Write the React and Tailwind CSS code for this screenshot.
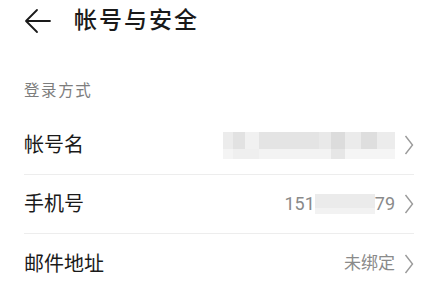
import React from 'react';

const FONT = "font-['Roboto','Noto_Sans_CJK_SC',sans-serif]";

const Chevron = () => (
  <svg width="10" height="20" viewBox="0 0 10 20" className="ml-[9px] shrink-0">
    <path d="M1.5 1 L8.5 10 L1.5 19" fill="none" stroke="#9a9a9a" strokeWidth="1.4" strokeLinejoin="miter" />
  </svg>
);

// blurred (masked) account name
const BlurredName = () => (
  <div className="flex flex-col w-[172px] h-[27px]">
    <div className="flex h-[17px]">
      <div className="w-[10px] bg-[#ececec]" />
      <div className="w-[12px] bg-[#e2e2e2]" />
      <div className="w-[14px] bg-[#f1f1f1]" />
      <div className="w-[60px] bg-[#e4e4e4]" />
      <div className="w-[12px] bg-[#e9e9e9]" />
      <div className="w-[14px] bg-[#dcdcdc]" />
      <div className="w-[16px] bg-[#ebebeb]" />
      <div className="w-[16px] bg-[#dedede]" />
      <div className="w-[18px] bg-[#ececec]" />
    </div>
    <div className="flex h-[10px]">
      <div className="w-[10px] bg-[#f4f4f4]" />
      <div className="w-[26px] bg-[#efefef]" />
      <div className="w-[72px] bg-[#f3f3f3]" />
      <div className="w-[14px] bg-[#e6e6e6]" />
      <div className="w-[50px] bg-[#f5f5f5]" />
    </div>
  </div>
);

const Row = ({ label, children, last }) => (
  <div className={`flex items-center justify-between h-[59px] ${last ? '' : 'border-b border-[#ededed]'}`}>
    <span className="text-[20px] text-[#1a1a1a] leading-none">{label}</span>
    <div className="flex items-center text-[17px] text-[#8a8a8a] leading-none">
      {children}
      <Chevron />
    </div>
  </div>
);

export default function App() {
  return (
    <div className={`w-[434px] h-[286px] bg-white overflow-hidden ${FONT}`}>
      {/* header */}
      <div className="flex items-center h-[41px] pl-[24px]">
        <svg width="28" height="26" viewBox="0 0 28 26" className="shrink-0">
          <path d="M26 13 H3 M13 2 L2 13 L13 24" fill="none" stroke="#1a1a1a" strokeWidth="1.8" strokeLinecap="round" strokeLinejoin="round" />
        </svg>
        <h1 className="ml-[22px] text-[23px] font-medium tracking-[2px] text-[#1a1a1a] leading-none">帐号与安全</h1>
      </div>

      <div className="pl-[24px] pr-[20px]">
        <div className="mt-[41px] h-[20px] flex items-center text-[15.5px] tracking-[1.6px] text-[#7d7d7d]">登录方式</div>

        <div className="mt-[14px]">
          <Row label="帐号名">
            <BlurredName />
          </Row>
          <Row label="手机号">
            <span className="text-[18px]">151</span>
            <div className="w-[60px] h-[20px] bg-[#ebebeb] flex flex-col justify-end">
              <div className="h-[6px] bg-[#f2f2f2]" />
            </div>
            <span className="text-[18px]">79</span>
          </Row>
          <Row label="邮件地址" last>
            <span>未绑定</span>
          </Row>
        </div>
      </div>
    </div>
  );
}
